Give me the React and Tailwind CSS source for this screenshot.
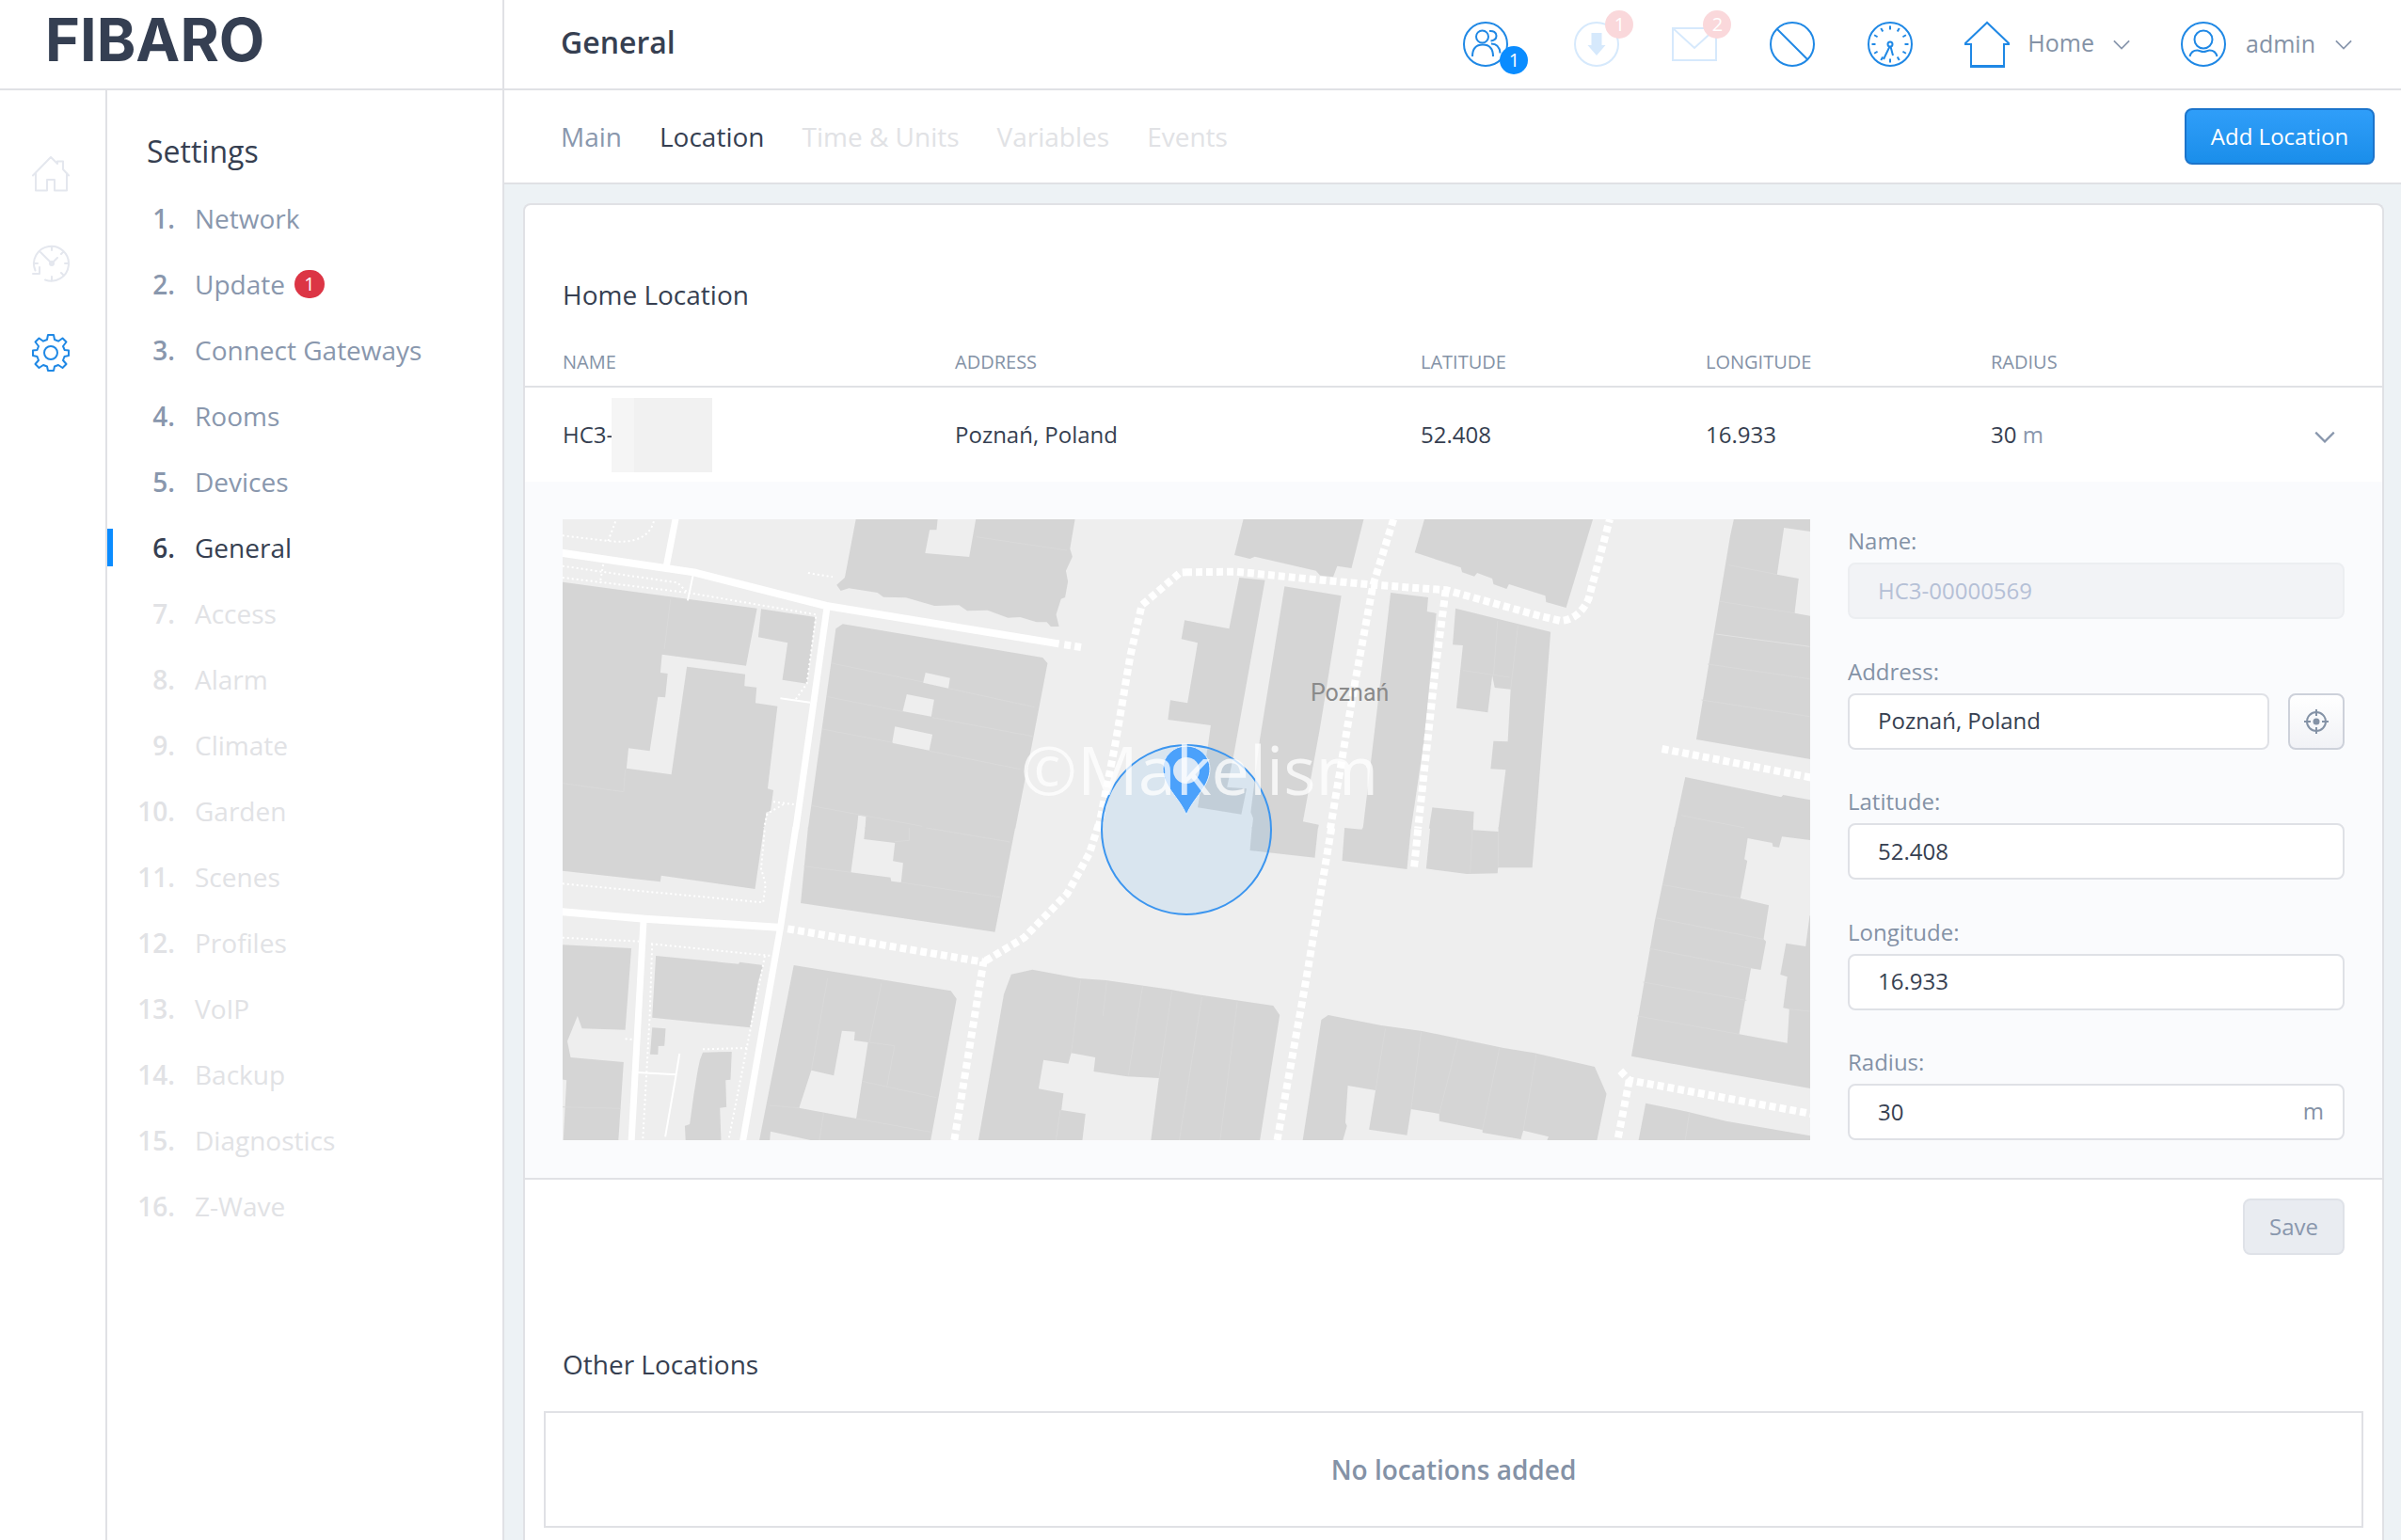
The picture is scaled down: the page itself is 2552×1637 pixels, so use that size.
import React, { useState } from 'react';

const MENU = [
  { label: 'Network', state: 'normal' },
  { label: 'Update', state: 'normal', badge: 1 },
  { label: 'Connect Gateways', state: 'normal' },
  { label: 'Rooms', state: 'normal' },
  { label: 'Devices', state: 'normal' },
  { label: 'General', state: 'active' },
  { label: 'Access', state: 'off' },
  { label: 'Alarm', state: 'off' },
  { label: 'Climate', state: 'off' },
  { label: 'Garden', state: 'off' },
  { label: 'Scenes', state: 'off' },
  { label: 'Profiles', state: 'off' },
  { label: 'VoIP', state: 'off' },
  { label: 'Backup', state: 'off' },
  { label: 'Diagnostics', state: 'off' },
  { label: 'Z-Wave', state: 'off' },
];

const TABS = [
  { label: 'Main', state: 'normal' },
  { label: 'Location', state: 'active' },
  { label: 'Time & Units', state: 'off' },
  { label: 'Variables', state: 'off' },
  { label: 'Events', state: 'off' },
];

const STATE_COLORS = {
  normal: 'text-[#8997ad]',
  active: 'text-[#363f51]',
  off: 'text-[#e1e2e5]',
};

const TICKS = [0, 30, 60, 90, 120, 150, 180, 210, 240, 270, 300, 330];

// 48x48 outline icons for the top bar
function TopIcon({ children, className = 'text-[#1f88e5]' }) {
  return (
    <svg viewBox="0 0 48 48" fill="none" stroke="currentColor" strokeWidth="2" className={`size-12 ${className}`}>
      {children}
    </svg>
  );
}

// 40x40 outline icons for the left rail
function RailIcon({ children }) {
  return (
    <svg viewBox="0 0 40 40" fill="none" stroke="currentColor" strokeWidth="2" strokeLinejoin="round" strokeLinecap="round" className="size-10">
      {children}
    </svg>
  );
}

function Chevron({ className }) {
  return (
    <svg viewBox="0 0 20 12" fill="none" stroke="#8997ad" strokeWidth="2" className={className}>
      <path d="M1 1.5L10 10.5L19 1.5" />
    </svg>
  );
}

function Badge({ children, className }) {
  return (
    <span className={`absolute flex size-[30px] items-center justify-center rounded-full text-xl leading-[30px] text-white ${className}`}>
      {children}
    </span>
  );
}

function Logo() {
  return (
    <a href="#home" aria-label="FIBARO home" className="flex h-[94px] items-start pl-12 pt-[7px] font-['Inter',sans-serif] text-[63px] font-bold leading-[70px] text-[#353f52]">
      FIBARO
    </a>
  );
}

function TopBar() {
  return (
    <header className="flex h-24 items-center justify-between border-b-2 border-[#e0e1e5] bg-white pl-[60px] pr-[52px]">
      <h1 className="pb-1 text-[32px] font-semibold leading-10 text-[#363f51]">General</h1>
      <div className="flex items-center">
        <button type="button" aria-label="Users" className="relative mr-[70px]">
          <TopIcon>
            <circle cx="24" cy="24" r="23" />
            <circle cx="20.5" cy="16" r="6.5" />
            <path d="M10 37c0-8 4-12.500 11-12.500S32 29 32 37M28 10c4-.6 7.500 1.500 7.500 5 0 3-2 5-6 5.500M30 23.500c6 0 9 4 9.500 10" />
          </TopIcon>
          <Badge className="left-[39px] top-[26px] bg-[#0a8cff]">1</Badge>
        </button>
        <button type="button" aria-label="Downloads" className="relative mr-14">
          <TopIcon className="text-[#d6e9fc]">
            <circle cx="24" cy="24" r="23" />
            <path d="M18.500 12h11v13h4L24 36l-9.500-11h4z" fill="currentColor" stroke="none" />
          </TopIcon>
          <Badge className="-top-3 left-[33px] bg-[#fad8db]">1</Badge>
        </button>
        <button type="button" aria-label="Messages" className="relative mr-14">
          <TopIcon className="text-[#d6e9fc]">
            <path d="M1 7h46v34H1zM1 7l23 21L47 7" />
          </TopIcon>
          <Badge className="-top-3 left-[33px] bg-[#fad8db]">2</Badge>
        </button>
        <button type="button" aria-label="Block" className="mr-14">
          <TopIcon>
            <circle cx="24" cy="24" r="23" />
            <path d="M8 8l32 32" />
          </TopIcon>
        </button>
        <button type="button" aria-label="Clock" className="mr-[54px]">
          <TopIcon>
            <circle cx="24" cy="24" r="23" />
            {TICKS.map((angle) => (
              <path key={angle} d="M24 4.500v4" transform={`rotate(${angle} 24 24)`} />
            ))}
            <circle cx="24" cy="24" r="2.500" />
            <path d="M23.500 26.500L17 40M24.500 26.500L27 36" />
          </TopIcon>
        </button>
        <button type="button" className="mr-[54px] flex items-center text-[25px] leading-10 text-[#8492a6]">
          <svg viewBox="0 0 50 50" fill="none" stroke="#1f88e5" strokeWidth="2" className="size-[50px]">
            <path d="M25 2L2 24v1h6v23h35V25h5v-1z" />
            <path d="M7 49h37" />
          </svg>
          <span className="ml-[18px] -mt-1">Home</span>
          <Chevron className="ml-5 h-[11px] w-[18px]" />
        </button>
        <button type="button" className="flex items-center text-[25px] leading-10 text-[#8492a6]">
          <TopIcon>
            <circle cx="24" cy="24" r="23" />
            <circle cx="24" cy="19" r="9.500" />
            <path d="M9.500 37c1-4 4-6.500 8-6.500 2 0 4 1.500 6.500 1.500s4.500-1.500 6.500-1.500c4 0 7 2.500 8 6.500" />
          </TopIcon>
          <span className="ml-[21px] -mt-0.5">admin</span>
          <Chevron className="ml-[21px] h-[11px] w-[18px]" />
        </button>
      </div>
    </header>
  );
}

function Rail() {
  return (
    <nav aria-label="Sections" className="flex w-[114px] shrink-0 flex-col gap-[55px] border-r-2 border-[#e0e1e5] pl-[34px] pt-[69px]">
      <a href="#dashboard" aria-label="Dashboard" className="text-[#e4e7ee]">
        <RailIcon>
          <path d="M1 21.500L20 2l7 7V6.500h6V15l6 6.500M4 19v18.500h12V26h8v11.500h13V19" />
        </RailIcon>
      </a>
      <a href="#history" aria-label="History" className="text-[#e4e7ee]">
        <RailIcon>
          <path d="M3.500 27.500A18.500 18.500 0 1 1 14 37.500M1 31h7v-7M21 2v4M21 34v4M39 20h-4M3 20h3M33 8l-2 2M33 32l-2-2M9 8l12 12 6-6" />
          <circle cx="21" cy="20" r="2" />
        </RailIcon>
      </a>
      <a href="#settings" aria-label="Settings" className="text-[#1f88e5]">
        <RailIcon>
          <path d="M17 1h6l1 5 4 1.700 4.500-3.200 4 4L33 13l1.700 4L39 17.500v5.500l-4.500 1L33 28l3.500 4-4 4-4.500-3-4 1.500-1 4.500h-6l-1-4.500-4-1.500-4.500 3-4-4L7 28l-1.500-4L1 23v-5.500l4.500-.5L7 13 3.500 8.500l4-4L12 7.700 16 6z" />
          <circle cx="20" cy="20" r="7" />
        </RailIcon>
      </a>
    </nav>
  );
}

function SettingsMenu() {
  return (
    <nav aria-label="Settings" className="flex-1 pt-[43px]">
      <h2 className="pl-[42px] text-[32px] leading-[44px] text-[#363f51]">Settings</h2>
      <ol className="mt-[29px] flex flex-col gap-[30px]">
        {MENU.map((item, i) => (
          <li key={item.label} className={`relative ${STATE_COLORS[item.state]}`}>
            {item.state === 'active' && <span className="absolute left-0 top-0 h-10 w-1.5 bg-[#0a8cff]" />}
            <a href={`#${item.label}`} className="flex h-10 items-center text-[28px] leading-10">
              <span className="w-[72px] text-right font-semibold">{i + 1}.</span>
              <span className="ml-[21px]">{item.label}</span>
              {item.badge && (
                <span className="ml-2.5 flex h-[30px] w-8 items-center justify-center rounded-full bg-[#dc3545] text-xl leading-[30px] text-white">
                  {item.badge}
                </span>
              )}
            </a>
          </li>
        ))}
      </ol>
    </nav>
  );
}

function Buildings() {
  return (
    <g fill="#d5d5d5">
      {/* north-west tile */}
      <g transform="translate(-8 -12) scale(.43367 .33333)">
        <path d="M738 30L710 222L690 245L700 264L720 256L790 270L805 284L860 286L930 312L990 310L1010 328L1060 326L1110 350L1140 348L1180 364L1205 364L1215 378L1235 378L1228 340L1240 290L1250 285L1257 235L1252 200L1268 155L1262 130L1275 30L1032 30L1015 156L907 144L918 70L935 70L938 30Z" />
        <path d="M18 236L495 320L468 503L262 467L258 525L276 528L270 604L252 602L232 775L180 766L175 830L285 850L323 506L466 530L464 568L494 572L491 622L545 632L521 895L535 900L528 967L518 970L512 1022L10 1022Z" />
        <path d="M505 322L638 348L617 560L557 548L570 430L498 412Z" />
        <path d="M688 385L705 370L1195 477L1207 495L1168 760L1128 1022L760 1022L762 983L743 980L740 1022L620 1022Z" />
        <g fill="#eee">
          <path d="M908 525L968 542L964 575L902 557Z" />
          <path d="M862 594L929 611L922 665L852 648Z" />
          <path d="M833 697L925 722L917 773L826 749Z" />
        </g>
      </g>
      {/* south-west tile */}
      <g transform="translate(-8 328) scale(.43367 .33333)">
        <path d="M10 -2L512 -2L490 195L260 152L258 172L10 136Z" />
        <path d="M620 -2L740 -2L725 142L822 158L824 170L848 174L853 112L828 106L833 48L757 36L760 -2L1128 -2L1078 332L602 240Z" />
        <path d="M10 372L187 384L172 644L66 640L55 600L30 680L38 732L168 747L155 1000L20 1000L28 805L10 800Z" />
        <path d="M247 408L450 434L452 428L510 438L498 490L478 637L238 605Z" />
        <path d="M238 637L271 640L268 695L253 696L252 723L233 722Z" />
        <path d="M362 716L433 714L430 803L418 805L420 890L404 893L407 1000L320 1000L318 950L330 945L340 850L350 770L355 740Z" />
        <path d="M585 438L970 520L984 545L920 1000L640 1000L528 968L526 1000L500 1000Z" />
        <path d="M703 647L735 650L733 678L767 684L738 927L598 893L628 773L683 790Z" fill="#eee" />
        <path d="M1118 467L1170 452L1285 480L1350 486L1510 516L1568 530L1760 567L1776 597L1727 1000L1460 1000L1480 798L1402 793L1320 777L1324 732L1265 718L1258 752L1197 740L1185 832L1246 847L1241 900L1300 912L1292 1000L1037 1000L1100 530Z" />
      </g>
      {/* north-east tile */}
      <g transform="translate(662 -12) scale(.43367 .33333)">
        <path d="M143 30L120 150L158 162L170 155L320 200L330 215L362 220L372 185L407 192L438 30Z" />
        <path d="M587 30L562 142L675 190L678 205L708 218L715 207L752 225L755 243L787 258L793 243L882 280L884 300L933 318L1000 30Z" />
        <path d="M-2 358L107 385L132 222L195 230L118 790L102 890L150 895L137 977L30 955L55 760L62 693L-43 675L-37 613L5 622L30 430L-10 418Z" />
        <path d="M243 250L382 280L330 700L288 1000L327 1010L325 1022L163 1022L166 990L160 970L182 740Z" />
        <path d="M503 270L595 285L592 330L615 336L585 740L553 1022L435 1022L470 640Z" />
        <path d="M662 320L895 395L858 1022L767 1022L785 835L748 832L755 743L790 745L797 578L758 573L752 535L741 652L664 638L680 438L655 436Z" />
        <path d="M605 955L707 968L705 1022L597 1022Z" />
        <path d="M1345 30L1335 90L1252 738L1535 802L1535 345L1493 335L1503 225L1450 212L1467 63L1535 76L1535 30Z" />
        <path d="M1225 858L1460 922L1465 915L1535 932L1535 1022L1198 1022Z" />
      </g>
      {/* south-east tile */}
      <g transform="translate(662 328) scale(.43367 .33333)">
        <path d="M163 -2L325 -2L317 95L158 72Z" />
        <path d="M390 0L432 5L436 -2L553 -2L543 132L384 105Z" />
        <path d="M600 -2L705 -2L705 7L767 12L767 -2L858 -2L850 127L766 127L765 145L690 147L590 130Z" />
        <path d="M1198 -2L1535 -2L1535 40L1462 28L1455 62L1440 60L1438 48L1378 33L1370 100L1377 105L1360 225L1430 247L1417 355L1423 362L1410 453L1386 448L1357 658L1475 686L1480 578L1465 574L1475 475L1458 468L1472 368L1520 378L1530 280L1535 280L1535 832L1260 768L1093 728L1150 300Z" />
        <path d="M1128 878L1230 905L1325 935L1535 983L1535 1000L1110 1000Z" />
        <path d="M350 597L480 630L580 648L780 702L855 718L1003 762L1032 848L1008 1000L885 1000L890 985L828 965L822 993L728 972L728 963L622 935L622 912L553 897L543 980L450 962L466 837L398 822L392 940L396 950L385 1000L287 1000L333 612Z" />
      </g>
    </g>
  );
}

function ParcelLines() {
  return (
    <g fill="none" stroke="#dadada" strokeWidth="1">
      <g transform="translate(-8 -12) scale(.43367 .33333)">
        <path vectorEffect="non-scaling-stroke" d="M283 290L268 450M678 495L902 555M964 575L1175 635M668 602L855 650M925 668L1170 728M655 705L828 748M918 775L1140 833M20 878L168 905L172 835M1032 92L1255 135M630 950L900 1015" />
      </g>
      <g transform="translate(-8 328) scale(.43367 .33333)">
        <path vectorEffect="non-scaling-stroke" d="M610 122L725 142M848 174L1095 222M868 0L868 40L833 44M910 0L1115 45M668 480L628 773M800 495L770 684L832 695L813 828M752 808L935 860M525 885L598 893M738 927L920 970M658 910L648 996M1288 485L1265 718M1352 490L1343 600M1440 505L1405 790M1512 520L1480 798M1585 540L1530 996M1672 555L1630 996M18 890L160 895M1238 900L1228 996" />
      </g>
      <g transform="translate(662 -12) scale(.43367 .33333)">
        <path vectorEffect="non-scaling-stroke" d="M765 360L755 535M815 375L797 578M680 518L795 540M1332 182L1450 212M1310 298L1493 335M1280 498L1530 545M1265 612L1530 665M1215 980L1370 1020" />
        <path vectorEffect="non-scaling-stroke" d="M1300 402L1530 442" stroke="#e2e2e2" />
      </g>
      <g transform="translate(662 328) scale(.43367 .33333)">
        <path vectorEffect="non-scaling-stroke" d="M703 5L698 145M767 12L766 127M1170 182L1360 225M1155 288L1417 355M1138 385L1386 448M1122 492L1375 550M1108 600L1357 658M490 640L466 837M578 650L553 897M668 675L622 912M770 700L728 963M860 722L828 965M1235 908L1225 996M1480 578L1530 585" />
      </g>
    </g>
  );
}

function Roads() {
  return (
    <g fill="none" stroke="#fff">
      <g transform="translate(-8 -12) scale(.43367 .33333)">
        <path vectorEffect="non-scaling-stroke" strokeWidth="8" strokeLinejoin="round" d="M10 142L340 205L560 278L665 312L1235 433" />
        <path vectorEffect="non-scaling-stroke" strokeWidth="7" d="M296 30L272 190M667 312L590 1024" />
        <path vectorEffect="non-scaling-stroke" strokeWidth="8" strokeDasharray="7 4" d="M1248 436L1295 445M1332 1020L1372 760L1410 470L1438 310L1532 206L1545 205" />
        <path vectorEffect="non-scaling-stroke" strokeWidth="2" strokeDasharray="2 3" d="M18 88L130 105Q230 120 243 36M130 105L150 36M18 185L300 238L325 270M18 222L325 270L640 340L617 560L590 610M118 180L110 240M620 207L680 220M535 937L585 945M560 945L520 975L512 1020" />
        <path vectorEffect="non-scaling-stroke" strokeWidth="2" d="M338 215L325 295M552 607L625 620" />
      </g>
      <g transform="translate(-8 328) scale(.43367 .33333)">
        <path vectorEffect="non-scaling-stroke" strokeWidth="8" d="M10 267L220 290L555 318" />
        <path vectorEffect="non-scaling-stroke" strokeWidth="7" d="M590 -2L552 320L460 1000M217 292L187 1000" />
        <path vectorEffect="non-scaling-stroke" strokeWidth="8" strokeDasharray="7 4" d="M570 322L1050 428L978 1000M1332 -10L1310 80L1255 210L1150 350L1050 428" />
        <path vectorEffect="non-scaling-stroke" strokeWidth="2" strokeDasharray="2 3" d="M18 178L510 238L516 180L505 130L514 0M18 350L205 362M235 370L530 408M238 370L232 600L215 996M514 408L470 700L425 996M362 706L470 702M172 673L195 675" />
        <path vectorEffect="non-scaling-stroke" strokeWidth="2" d="M305 720L295 800L270 985M200 780L298 787" />
      </g>
      <g transform="translate(662 -12) scale(.43367 .33333)">
        <path vectorEffect="non-scaling-stroke" strokeWidth="8" strokeDasharray="7 4" d="M0 205L125 203L300 226L460 245L640 262L870 345L920 360Q965 355 988 290L1040 36M510 36L460 245L415 560L355 1022M638 262L612 520L570 1022M1168 768L1535 860" />
      </g>
      <g transform="translate(662 328) scale(.43367 .33333)">
        <path vectorEffect="non-scaling-stroke" strokeWidth="8" strokeDasharray="7 4" d="M358 0L295 490L225 996M570 5L560 132M1066 775L1088 805L1535 912M1088 805L1060 990" />
      </g>
    </g>
  );
}

function LocationMap() {
  return (
    <svg viewBox="0 0 1326 660" preserveAspectRatio="xMidYMid slice" role="img" aria-label="Map of Poznań" className="h-[660px] min-w-0 flex-1 bg-[#eeeeee]">
      <Buildings />
      <ParcelLines />
      <Roads />
      <text x="795" y="193" fill="#8a8a8a" className="font-['Roboto',sans-serif] text-[25px]">Poznań</text>
      <circle cx="663" cy="330" r="90" fill="#0a8cff" fillOpacity=".09" stroke="#3b95ef" strokeWidth="2" />
      <path d="M663 314C655 295 638 284 638 265A25 24 0 0 1 688 265C688 284 671 295 663 314Z" fill="#4ba1fb" stroke="#e4f0fc" strokeWidth="1" />
      <circle cx="663" cy="267" r="14" fill="#d9e7f6" />
      <text x="487" y="293" fill="#fff" fillOpacity=".75" className="font-['Open_Sans',sans-serif] text-[72px]">©Makelism</text>
    </svg>
  );
}

function Field({ id, label, value, disabled, suffix, action }) {
  return (
    <div>
      <label htmlFor={id} className="block text-2xl leading-[46px] text-[#8492a6]">{label}</label>
      <div className="relative flex gap-5">
        <input
          id={id}
          type="text"
          defaultValue={value}
          disabled={disabled}
          className="h-[60px] min-w-0 flex-1 rounded-lg border-2 border-[#dfe1e6] bg-white px-[30px] pb-0.5 text-2xl text-[#363f51] disabled:border-[#eceef1] disabled:bg-[#f2f3f6] disabled:text-[#b5c0d6]"
        />
        {suffix && <span className="absolute right-[22px] top-0 text-2xl leading-[58px] text-[#8492a6]">{suffix}</span>}
        {action}
      </div>
    </div>
  );
}

function LocationForm() {
  return (
    <form className="flex w-[528px] shrink-0 flex-col justify-between">
      <Field id="name" label="Name:" value="HC3-00000569" disabled />
      <Field
        id="address"
        label="Address:"
        value="Poznań, Poland"
        action={
          <button type="button" aria-label="Locate" className="flex size-[60px] items-center justify-center rounded-lg border-2 border-[#cdd1da] bg-linear-to-b from-white to-[#f1f2f6]">
            <svg viewBox="0 0 26 26" fill="none" stroke="#8492a6" strokeWidth="2" className="size-[26px]">
              <circle cx="13" cy="13" r="10" />
              <circle cx="13" cy="13" r="3.500" fill="#8492a6" stroke="none" />
              <path d="M13 0v7M13 19v7M0 13h7M19 13h7" />
            </svg>
          </button>
        }
      />
      <Field id="latitude" label="Latitude:" value="52.408" />
      <Field id="longitude" label="Longitude:" value="16.933" />
      <Field id="radius" label="Radius:" value="30" suffix="m" />
    </form>
  );
}

function HomeLocation() {
  const [open, setOpen] = useState(true);

  return (
    <section>
      <h2 className="px-10 pb-0.5 pt-[75px] text-[28px] leading-10 text-[#363f51]">Home Location</h2>
      <table className="w-full table-fixed border-separate border-spacing-0 text-left">
        <thead>
          <tr className="text-xl leading-[30px] text-[#8492a6] [&>th]:border-b-2 [&>th]:border-[#e0e1e5] [&>th]:pb-2.5 [&>th]:pt-[35px] [&>th]:font-normal">
            <th className="w-[457px] pl-10">NAME</th>
            <th className="w-[495px]">ADDRESS</th>
            <th className="w-[303px]">LATITUDE</th>
            <th className="w-[303px]">LONGITUDE</th>
            <th>RADIUS</th>
            <th className="w-[110px]" />
          </tr>
        </thead>
        <tbody>
          <tr className="h-[100px] text-2xl text-[#363f51]">
            <td className="pl-10">
              <div className="flex items-center">
                HC3-
                <span className="-ml-0.5 flex h-[79px] w-[107px] bg-[#f1f1f1]">
                  <span className="w-6 bg-[#f5f5f5]" />
                </span>
              </div>
            </td>
            <td>Poznań, Poland</td>
            <td>52.408</td>
            <td>16.933</td>
            <td>30 <span className="text-[#8997ad]">m</span></td>
            <td className="pr-[50px] text-right">
              <button type="button" aria-label="Toggle details" onClick={() => setOpen(!open)} className="align-middle">
                <Chevron className="h-[13px] w-[22px]" />
              </button>
            </td>
          </tr>
          {open && (
            <tr>
              <td colSpan={6} className="border-b-2 border-[#e0e1e5] bg-[#fafbfd] p-10">
                <div className="flex gap-10">
                  <LocationMap />
                  <LocationForm />
                </div>
              </td>
            </tr>
          )}
        </tbody>
      </table>
      <div className="flex justify-end px-10 pt-5">
        <button type="button" disabled className="h-[60px] w-[108px] rounded-lg border-2 border-[#dfe2e8] bg-[#e9ecf1] text-2xl text-[#8997ad]">
          Save
        </button>
      </div>
    </section>
  );
}

export default function App() {
  return (
    <div className="flex min-h-screen bg-white font-['Open_Sans',sans-serif]">
      <aside className="flex w-[536px] shrink-0 flex-col border-r-2 border-[#e0e1e5]">
        <div className="h-24 border-b-2 border-[#e0e1e5]">
          <Logo />
        </div>
        <div className="flex flex-1">
          <Rail />
          <SettingsMenu />
        </div>
      </aside>

      <main className="flex min-w-0 flex-1 flex-col bg-[#edf2f5]">
        <TopBar />
        <div className="flex h-[100px] items-center justify-between border-b-2 border-[#e0e1e5] bg-white pl-[60px] pr-7">
          <nav aria-label="General settings" className="flex gap-10 text-[28px] leading-10">
            {TABS.map((tab) => (
              <a key={tab.label} href={`#${tab.label}`} className={STATE_COLORS[tab.state]}>{tab.label}</a>
            ))}
          </nav>
          <button type="button" className="h-[60px] w-[202px] rounded-lg border-2 border-[#1c74cb] bg-linear-to-b from-[#2f9ef9] to-[#1a8eea] text-2xl text-white">
            Add Location
          </button>
        </div>

        <div className="flex flex-1 flex-col pl-5 pr-[18px] pt-5">
          <div className="flex-1 rounded-t-lg border-2 border-b-0 border-[#e0e1e5] bg-white">
            <HomeLocation />
            <section className="px-5 pt-24">
              <h2 className="px-5 text-[28px] leading-10 text-[#363f51]">Other Locations</h2>
              <p className="mt-[30px] border-2 border-[#e0e1e5] text-center text-[28px] font-semibold leading-[120px] text-[#8492a6]">
                No locations added
              </p>
            </section>
          </div>
        </div>
      </main>
    </div>
  );
}
